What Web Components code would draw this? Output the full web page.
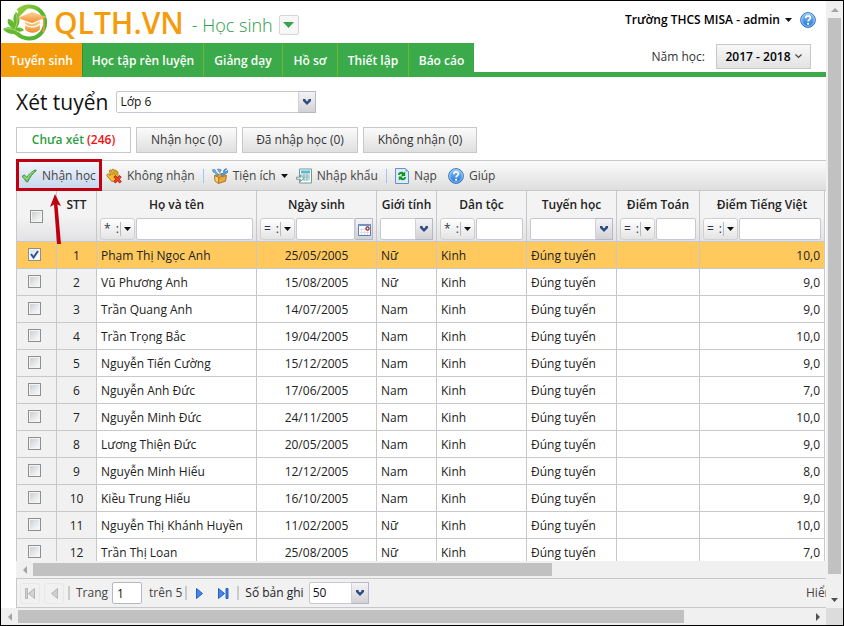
<!DOCTYPE html>
<html lang="vi">
<head>
<meta charset="utf-8">
<title>QLTH.VN - Xét tuyển</title>
<style>
html, body { height: 100%; margin: 0; }
body { font: 12px/16px "Open Sans", "Noto Sans", sans-serif; color: #222; background: #fff; }
</style>
</head>
<body>
<app-window></app-window>
<script>
const reset = `<style>
*, *::before, *::after { box-sizing: border-box; }
button, input, select { font: inherit; color: inherit; margin: 0; border-radius: 0; }
button { cursor: pointer; padding: 0; background: none; border: 0; white-space: nowrap; }
a { color: inherit; text-decoration: none; white-space: nowrap; }
svg { display: block; flex: none; }
</style>`;

function define(name, html) {
  const template = document.createElement('template');
  customElements.define(name, class extends HTMLElement {
    connectedCallback() {
      if (this.shadowRoot) return;
      template.innerHTML = reset + (typeof html === 'function' ? html(this) : html);
      this.attachShadow({ mode: 'open' }).append(template.content.cloneNode(true));
    }
  });
}

/* ---------- icons ---------- */
const icons = {
  caret: [7, 4, '<path d="M0 0h7L3.5 4z" fill="#111"/>'],
  help: [16, 16, '<defs><linearGradient id="h" x2="0" y2="1"><stop stop-color="#8cc4f8"/><stop offset="1" stop-color="#1d6fd8"/></linearGradient></defs><circle cx="8" cy="8" r="7.4" fill="url(#h)" stroke="#2b6cb4" stroke-width=".9"/><circle cx="8" cy="8" r="6.3" fill="none" stroke="#b5dcfb" stroke-width=".8"/><path d="M5.6 6.2C5.8 3 10.6 3.200 10.4 6c-.1 1.600-2.300 1.700-2.300 3.600" fill="none" stroke="#fff" stroke-width="1.7"/><circle cx="8.100" cy="11.800" r="1.100" fill="#fff"/>'],
  check: [16, 16, '<path d="M1 8.500l2.500-1.600 2.300 2.500C8.200 5.800 11 3.300 14.600 1.800l.6.9C11.600 5.500 9 9 6.800 13.800H5.300C4.200 11.700 2.800 9.800 1 8.500z" fill="#6cc35e" stroke="#3c8f38" stroke-width=".9"/><path d="M3 8.300l2.700 3c2-3.500 4.300-6 7-7.800" fill="none" stroke="#a5e38f" stroke-width="1"/>'],
  hand: [16, 16, '<path d="M1 6.500l1.500-.5 2 1.500L3.300 2.500l1.200-.6 1 .6L6 1.500 7.500 1.200l.8 1 1.400-.2.7 1.200 1.300.5.4 5.200-2 4.300H5.500L1 8z" fill="#f0bf38" stroke="#a87612" stroke-width=".9"/><path d="M5.600 2.500l.7 4.700M7.900 2.300l.2 4.800M10.200 3l-.3 4.200" stroke="#a87612" stroke-width=".8"/><path d="M7.800 9l1.500-1.500 2.200 2 2.200-2L15.200 9l-1.900 2.300 2 2.200-1.500 1.500-2.300-1.900L9.300 15l-1.500-1.500 2-2.200z" fill="#ee3f24" stroke="#a51a0c" stroke-width=".8"/>'],
  tools: [16, 16, '<path d="M2.500 7.500L10 5.500l4.500 2-1 5.700L6.500 15.500 3 13z" fill="#e9a83a" stroke="#9b651b" stroke-width=".8"/><path d="M2.500 7.500l4.300 2 7.700-2M6.800 9.500l-.3 6" fill="none" stroke="#b57920"/><path d="M3.500 8.500l2.500 1.300-.2 4.400L3.600 12.800z" fill="#f8d27d"/><path d="M.6 1.600l2.500.2.800 1.900L6.800 7l-1.500 1.100L3 4.800l-2-.9zM5.500 1l3.700.6L8 4.500 6.700 3.700z" fill="#6ab3e6" stroke="#3979b4" stroke-width=".6"/><path d="M14.900.9L12.700 2.700l.3 1 1 .3 1.800-1.800c.7 2.300-1 3.700-2.700 3.200L10.400 8.300 9 7l2.600-2.500C11 2.500 12.700.4 14.900.9z" fill="#52a8e7" stroke="#2a6faf" stroke-width=".6"/>'],
  sheet: [16, 16, '<path d="M3.500 1h12v14h-12v-3M3.500 9V1" fill="#fff" stroke="#6f9a97"/><path d="M5 2.500h9V5H5z" fill="#48bde2"/><path d="M5 7h9v2H5zM5 10.500h9v2H5z" fill="#b8dce0"/><path d="M8 3v10M11 3v10M5 6h9M5 9.700h9" stroke="#83aeb0" stroke-width=".8"/><path d="M.5 9.200h4V7l3.300 3.200-3.300 3.300v-2.200h-4z" fill="#e7f1ef" stroke="#688e88" stroke-width=".8"/>'],
  reload: [14, 16, '<path d="M.5.5h10l3 3v12H.5z" fill="#dceaff" stroke="#6a8fc7"/><path d="M10.500.5v3h3z" fill="#7ea5df"/><path d="M3 7C3.200 3.700 7 3 8.800 4.800L10.200 3.700V8H6.100l1.200-1.500C6 5.500 5 5.800 4.700 7zM11 9c-.2 3.300-4 4-5.800 2.200L3.800 12.400V8.600h4.100L6.700 9.800C8 10.700 9 10.300 9.300 9z" fill="#0c9a16"/>'],
  chevron: [10, 6, '<path d="M1 0h2.500v1L5 2.500 6.500 1V0H9v2L5 6 1 2z" fill="#2d4a85"/>'],
  calendar: [13, 13, '<path d="M.5 1.500h12v11H.5z" fill="#fff" stroke="#5f7db3"/><path d="M0 1h13v2H0z" fill="#6f93c8"/><path d="M3.500 5v7M6.500 5v7M9.500 8v4M2 6.500h5M2 9.500h9" stroke="#dbe0e8"/><circle cx="9.500" cy="5.500" r="1.600" fill="#fff" stroke="#a11a22" stroke-width="1.200"/>'],
  first: [10, 11, '<path d="M.5.500h2v10h-2zM9.500.500v10L3.500 5.500z" fill="#d3d3d3" stroke="#aaa" stroke-width=".8"/>'],
  prev: [7, 11, '<path d="M6.500.500v10L.6 5.500z" fill="#d0d0d0" stroke="#aaa" stroke-width=".8"/>'],
  next: [7, 11, '<path d="M.5.500v10l6-5z" fill="#4685ec" stroke="#1c52bd" stroke-width=".9"/>'],
  last: [11, 11, '<path d="M.5.500v10l6-5zM8 .5h2v10H8z" fill="#4685ec" stroke="#1c52bd" stroke-width=".9"/>'],
  logo: [47, 38, '<defs><linearGradient id="g" x2="1" y2="1"><stop stop-color="#9bd03c"/><stop offset=".5" stop-color="#5cb82c"/><stop offset="1" stop-color="#4aae35"/></linearGradient><linearGradient id="o" x2="0" y2="1"><stop stop-color="#fbd299"/><stop offset="1" stop-color="#f08c2c"/></linearGradient></defs><path d="M15 8A16 16 0 1 1 14 30" fill="none" stroke="url(#g)" stroke-width="4"/><path d="M14 13c0-6 6-10 13-10L16 14z" fill="#8dc83b"/><path d="M13 9c5 6 4 11 1 16 3-1 5 0 7 2-2 2-5 2-7 1l3 7-6-4C7 31 3 30 0 26c3-2 7-2 10-1-5-2-6-6-5-9 3 0 5 2 6 4-1-4-1-7 2-11z" fill="#65b92f"/><path d="M13 11c2 5 1 10-1 15M2 26c4-1 8 0 12 2" fill="none" stroke="#b9e27c" stroke-width=".8"/><path d="M15 15L29 9.500 43 14 29 20z" fill="url(#o)" stroke="#f4b36a" stroke-width=".5"/><path d="M22 19l7 2.500L37 18v8c-3 5-12 5-15 0z" fill="url(#o)"/><path d="M21 21c5 4 12 4 17-1" fill="none" stroke="#fff" stroke-width="1.200"/><path d="M40 15.500v10l-1 4h2.500v-14z" fill="#f3993c"/>'],
  arrowUp: [8, 4, '<path d="M4 0l4 4H0z" fill="#a3a3a3"/>'],
  arrowDown: [7, 4, '<path d="M0 0h7L3.500 4z" fill="#505050"/>'],
  arrowLeft: [4, 8, '<path d="M4 0v8L0 4z" fill="#a3a3a3"/>'],
  arrowRight: [4, 8, '<path d="M0 0v8l4-4z" fill="#505050"/>'],
  triangle: [11, 6, '<path d="M0 0h11L5.500 6z" fill="#35a449"/>'],
  thin: [7, 5, '<path d="M.5.500l3 3 3-3" fill="none" stroke="#444" stroke-width="1.200"/>']
};
define('ui-icon', el => {
  const [w, h, body] = icons[el.getAttribute('name')];
  return `<style>:host { display: block; flex: none; }</style>
  <svg width="${w}" height="${h}" viewBox="0 0 ${w} ${h}" aria-hidden="true">${body}</svg>`;
});

/* ---------- scroll bar ---------- */
define('scroll-rail', el => {
  const vertical = el.hasAttribute('vertical');
  return `<style>
  :host { display: flex; flex-direction: ${vertical ? 'column' : 'row'}; background: #f0f0f0; flex: none; ${vertical ? 'width' : 'height'}: 17px; }
  .end { flex: none; width: 17px; height: 17px; display: grid; place-items: center; }
  .track { flex: 1; display: flex; flex-direction: inherit; padding: ${vertical ? '0 2px' : '2px 0'}; }
  .thumb { flex: 0 0 ${el.getAttribute('size')}; background: #c1c1c1; }
  </style>
  <div class="end"><ui-icon name="${vertical ? 'arrowUp' : 'arrowLeft'}"></ui-icon></div>
  <div class="track"><div class="thumb"></div></div>
  ${el.hasAttribute('open-ended') ? '' : `<div class="end"><ui-icon name="${vertical ? 'arrowDown' : 'arrowRight'}"></ui-icon></div>`}`;
});

/* ---------- form parts ---------- */
define('combo-box', el => `<style>
  :host { display: grid; grid-template-columns: 1fr 18px; height: 22px; min-width: 0; }
  select { grid-area: 1 / 1 / 2 / 3; appearance: none; width: 100%; height: 100%; padding: 0 20px 0 3px; border: 1px solid #c8c8d0; border-radius: 2px; background: #fff; color: #111; }
  .trigger { grid-area: 1 / 2; z-index: 1; pointer-events: none; display: grid; place-items: center; border: 1px solid #b5b8c8; border-left-color: #d0d0d6; background: linear-gradient(#f4f4f6, #d2d2d6); }
  </style>
  <select aria-label="${el.getAttribute('label')}"><option>${el.getAttribute('value') || ''}</option></select>
  <span class="trigger"><ui-icon name="chevron"></ui-icon></span>`);

define('filter-box', el => `<style>
  :host { display: flex; gap: 1px; height: 22px; }
  button { flex: none; width: 35px; display: flex; align-items: center; border: 1px solid #d0d0d0; border-radius: 3px; background: linear-gradient(#fff, #e4e4e4); font-weight: 400; color: #334; }
  .op { width: 20px; display: flex; justify-content: space-between; padding: 0 1px 0 3px; border-right: 1px solid #bbb; margin-right: 3px; line-height: 14px; }
  input { flex: 1; min-width: 0; width: 0; border: 1px solid #c8c8d0; border-radius: 2px; background: #fff; padding: 0 3px; }
  .date { width: 18px; justify-content: center; margin-left: -1px; border-color: #b5b8c8; border-left-color: #d0d0d6; border-radius: 0; background: linear-gradient(#f4f4f6, #d2d2d6); }
  </style>
  <button aria-label="Điều kiện lọc"><span class="op"><span>${el.getAttribute('op')}</span><span>:</span></span><ui-icon name="caret"></ui-icon></button>
  <input type="text" aria-label="Lọc">
  ${el.hasAttribute('date') ? '<button class="date" aria-label="Chọn ngày"><ui-icon name="calendar"></ui-icon></button>' : ''}`);

define('tick-box', el => `<style>
  :host { display: inline-block; vertical-align: middle; width: 13px; height: 13px; }
  input { display: block; appearance: none; width: 13px; height: 13px; border: 1px solid #8e8f8f; background: linear-gradient(135deg, #ccd0d4, #fafafa) center / 9px 9px no-repeat #f4f4f4; }
  input:checked { background: linear-gradient(135deg, #dde1e6, #fff) center / 9px 9px no-repeat #f4f4f4; }
  label { display: grid; }
  input, svg { grid-area: 1 / 1; }
  svg { display: none; pointer-events: none; }
  input:checked + svg { display: block; }
  </style>
  <label><input type="checkbox" aria-label="Chọn dòng" ${el.hasAttribute('checked') ? 'checked' : ''}><svg width="13" height="13"><path d="M3 6l2.500 3.500L10 3" fill="none" stroke="#30529b" stroke-width="2"/></svg></label>`);

/* ---------- header ---------- */
define('app-header', `<style>
  :host { display: flex; justify-content: space-between; height: 76px; border-bottom: 5px solid #3aaa4a; }
  .brand { height: 42px; display: flex; align-items: center; padding-left: 2px; }
  .name { font-size: 30px; line-height: 40px; font-weight: 600; color: #f59c0c; margin: 2px 0 0 4px; }
  .area { font-size: 18px; line-height: 24px; font-weight: 300; color: #2a9a48; margin: 6px 6px 0 8px; white-space: nowrap; }
  .drop { width: 20px; height: 20px; margin-top: 6px; border: 1px solid #d5d5d5; border-radius: 2px; background: #f7f7f7; display: grid; place-items: center; }
  .side { display: flex; flex-direction: column; align-items: flex-end; padding: 11px 10px 0 0; }
  .user, .year { display: flex; align-items: center; }
  .user { font-weight: 600; color: #000; height: 16px; }
  .user button { display: flex; align-items: center; gap: 5px; margin-right: 8px; font-weight: 600; }
  .year { margin: 16px 5px 0 0; gap: 11px; color: #333; }
  .year button { height: 25px; width: 95px; display: flex; align-items: center; justify-content: center; gap: 4px; border: 1px solid #c8c8c8; background: linear-gradient(#f8f8f8, #e2e2e2); font-weight: 600; color: #000; }
  </style>
  <div class="left">
    <div class="brand"><ui-icon name="logo"></ui-icon><span class="name">QLTH.VN</span><span class="area">- Học sinh</span><button class="drop" aria-label="Chọn phân hệ"><ui-icon name="triangle"></ui-icon></button></div>
    <main-nav></main-nav>
  </div>
  <div class="side">
    <div class="user"><button>Trường THCS MISA - admin<ui-icon name="caret"></ui-icon></button><ui-icon name="help"></ui-icon></div>
    <div class="year"><span>Năm học:</span><button>2017 - 2018<ui-icon name="thin"></ui-icon></button></div>
  </div>`);

define('main-nav', `<style>
  :host { display: flex; height: 34px; }
  nav { display: flex; }
  a { display: grid; place-items: center; height: 34px; padding-top: 2px; background: #3aaa4a; color: #fff; font-weight: 600; border-right: 1px solid #70b82b; }
  a:first-child { background: #f59c0c; border-right-color: #2f963d; }
  a:last-child { border-right: 0; }
  </style>
  <nav><a href="#" style="width:82px">Tuyển sinh</a><a href="#" style="width:121px">Học tập rèn luyện</a><a href="#" style="width:79px">Giảng dạy</a><a href="#" style="width:55px">Hồ sơ</a><a href="#" style="width:71px">Thiết lập</a><a href="#" style="width:65px">Báo cáo</a></nav>`);

/* ---------- status tabs ---------- */
define('status-tabs', `<style>
  :host { display: flex; gap: 5px; }
  button { height: 26px; border: 1px solid #c8c8c8; background: linear-gradient(#fbfbfb, #dfdfdf); color: #333; }
  .on { background: #fff; color: #2f9d43; font-weight: 600; }
  b { font-weight: 600; color: #f01010; }
  </style>
  <button class="on" style="width:115px">Chưa xét <b>(246)</b></button><button style="width:101px">Nhận học (0)</button><button style="width:116px">Đã nhập học (0)</button><button style="width:114px">Không nhận (0)</button>`);

/* ---------- toolbar ---------- */
define('tool-bar', `<style>
  :host { display: flex; align-items: center; height: 31px; border: solid #c8c8c8; border-width: 1px 0 1px 1px; background: linear-gradient(#fbfbfb, #dedede); color: #444; position: relative; }
  button { height: 25px; display: flex; align-items: center; gap: 5px; margin-right: 8px; }
  .on { width: 85px; padding-left: 4px; margin-right: 4px; background: linear-gradient(#eef4fb, #c8d8ee); }
  .wide { margin-right: 11px; }
  i { width: 1px; height: 14px; background: #98c8ff; margin-right: 8px; }
  .mark { position: absolute; left: -1px; top: -2px; z-index: 2; width: 86px; height: 32px; border: 3px solid #c00010; pointer-events: none; }
  .pointer { position: absolute; left: 32px; top: 33px; z-index: 2; pointer-events: none; }
  </style>
  <button class="on"><ui-icon name="check"></ui-icon>Nhận học</button>
  <button><ui-icon name="hand"></ui-icon>Không nhận</button><i></i>
  <button><ui-icon name="tools"></ui-icon>Tiện ích<ui-icon name="caret"></ui-icon></button>
  <button><ui-icon name="sheet"></ui-icon>Nhập khẩu</button><i></i>
  <button class="wide"><ui-icon name="reload"></ui-icon>Nạp</button>
  <button><ui-icon name="help"></ui-icon>Giúp</button>
  <span class="mark"></span>
  <svg class="pointer" width="14" height="52"><path d="M6 0l6 12-3.500-1.500L12 50H8L5 10.500 1 13z" fill="#c00010"/></svg>`);

/* ---------- grid ---------- */
const students = [
  ['Phạm Thị Ngọc Anh', '25/05/2005', 'Nữ', '10,0'],
  ['Vũ Phương Anh', '15/08/2005', 'Nữ', '9,0'],
  ['Trần Quang Anh', '14/07/2005', 'Nam', '9,0'],
  ['Trần Trọng Bắc', '19/04/2005', 'Nam', '10,0'],
  ['Nguyễn Tiến Cường', '15/12/2005', 'Nam', '9,0'],
  ['Nguyễn Anh Đức', '17/06/2005', 'Nam', '7,0'],
  ['Nguyễn Minh Đức', '24/11/2005', 'Nam', '10,0'],
  ['Lương Thiện Đức', '20/05/2005', 'Nam', '9,0'],
  ['Nguyễn Minh Hiếu', '12/12/2005', 'Nam', '8,0'],
  ['Kiều Trung Hiếu', '16/10/2005', 'Nam', '9,0'],
  ['Nguyễn Thị Khánh Huyền', '11/02/2005', 'Nữ', '10,0'],
  ['Trần Thị Loan', '25/08/2005', 'Nữ', '7,0']
];
define('student-grid', () => `<style>
  :host { display: block; flex: 1; min-height: 0; overflow: hidden; border-left: 1px solid #c8c8c8; padding-right: 1px; }
  table { width: 100%; table-layout: fixed; border-collapse: separate; border-spacing: 0; }
  th, td { border: solid #c8c8c8; border-width: 0 1px 1px 0; white-space: nowrap; }
  th { height: 51px; padding: 6px 3px 1px; background: linear-gradient(#f3f3f3 50%, #e2e2e5); vertical-align: top; font-weight: 600; text-align: center; }
  th span { display: block; height: 21px; }
  th.tick { vertical-align: middle; padding: 0; }
  td { height: 27px; padding: 2px 4px 0; text-align: left; }
  td:nth-child(1), td:nth-child(2) { background: #f1f1f1; text-align: center; }
  td:nth-child(1) { padding: 0 8px 3px 4px; }
  td:nth-child(4) { text-align: center; }
  td:nth-child(9) { text-align: right; }
  tr.on td { background: #ffc95d; }
  </style>
  <table>
  <colgroup><col style="width:40px"><col style="width:40px"><col style="width:160px"><col style="width:120px"><col style="width:60px"><col style="width:90px"><col style="width:90px"><col style="width:83px"><col></colgroup>
  <thead><tr><th class="tick"><tick-box></tick-box></th><th><span>STT</span></th>
  <th><span>Họ và tên</span><filter-box op="*"></filter-box></th>
  <th><span>Ngày sinh</span><filter-box op="=" date></filter-box></th>
  <th><span>Giới tính</span><combo-box label="Giới tính"></combo-box></th>
  <th><span>Dân tộc</span><filter-box op="*"></filter-box></th>
  <th><span>Tuyến học</span><combo-box label="Tuyến học"></combo-box></th>
  <th><span>Điểm Toán</span><filter-box op="="></filter-box></th>
  <th><span>Điểm Tiếng Việt</span><filter-box op="="></filter-box></th></tr></thead>
  <tbody>${students.map(([name, born, sex, mark], i) => `<tr${i ? '' : ' class="on"'}><td><tick-box ${i ? '' : 'checked'}></tick-box></td><td>${i + 1}</td><td>${name}</td><td>${born}</td><td>${sex}</td><td>Kinh</td><td>Đúng tuyến</td><td></td><td>${mark}</td></tr>`).join('')}</tbody>
  </table>`);

/* ---------- pager ---------- */
define('page-bar', `<style>
  :host { display: flex; align-items: center; flex: none; height: 30px; border: solid #c8c8c8; border-width: 1px 0 1px 1px; background: #f1f1f1; color: #444; padding-left: 3px; overflow: hidden; white-space: nowrap; }
  button { width: 20px; height: 21px; display: grid; place-items: center; margin-right: 4px; }
  button:disabled { border: 1px solid #e8e8e8; border-radius: 3px; }
  i { flex: none; width: 2px; height: 14px; background: #ccc; margin-right: 6px; }
  .tight { margin-right: 2px; }
  label { display: flex; align-items: center; gap: 4px; }
  input { width: 30px; height: 22px; border: 1px solid #b5b8c8; border-radius: 2px; padding: 0 4px; color: #111; }
  .total { margin: 0 3px 0 7px; }
  .size { color: #222; }
  combo-box { width: 60px; margin-left: 5px; }
  .info { margin-left: auto; flex: none; width: 20px; overflow: hidden; }
  </style>
  <button disabled aria-label="Trang đầu"><ui-icon name="first"></ui-icon></button>
  <button disabled aria-label="Trang trước"><ui-icon name="prev"></ui-icon></button><i></i>
  <label>Trang <input type="text" value="1"></label><span class="total">trên 5</span><i class="tight"></i>
  <button aria-label="Trang sau"><ui-icon name="next"></ui-icon></button>
  <button aria-label="Trang cuối"><ui-icon name="last"></ui-icon></button><i></i>
  <span class="size">Số bản ghi</span><combo-box label="Số bản ghi" value="50"></combo-box>
  <span class="info">Hiển</span>`);

/* ---------- window ---------- */
define('app-window', `<style>
  :host { display: grid; grid-template: minmax(0, 1fr) 17px / minmax(0, 1fr) 17px; height: 100vh; border: 1px solid #000; box-sizing: border-box; background: #fff; }
  .page { display: flex; flex-direction: column; min-width: 0; min-height: 0; overflow: hidden; }
  main { flex: 1; min-height: 0; display: flex; flex-direction: column; padding-left: 15px; }
  .title { display: flex; align-items: center; gap: 8px; height: 50px; }
  h1 { margin: 0; font-size: 21px; line-height: 28px; font-weight: 400; color: #111; white-space: nowrap; }
  .title combo-box { width: 200px; }
  tool-bar { margin-top: 7px; flex: none; }
  .corner { background: #dcdcdc; }
  </style>
  <div class="page">
    <app-header></app-header>
    <main>
      <div class="title"><h1>Xét tuyển</h1><combo-box label="Lớp" value="Lớp 6"></combo-box></div>
      <status-tabs></status-tabs>
      <tool-bar></tool-bar>
      <student-grid></student-grid>
      <scroll-rail size="65.4%" open-ended></scroll-rail>
      <page-bar></page-bar>
    </main>
  </div>
  <scroll-rail vertical size="97%"></scroll-rail>
  <scroll-rail size="84.2%"></scroll-rail>
  <div class="corner"></div>`);
</script>
</body>
</html>
